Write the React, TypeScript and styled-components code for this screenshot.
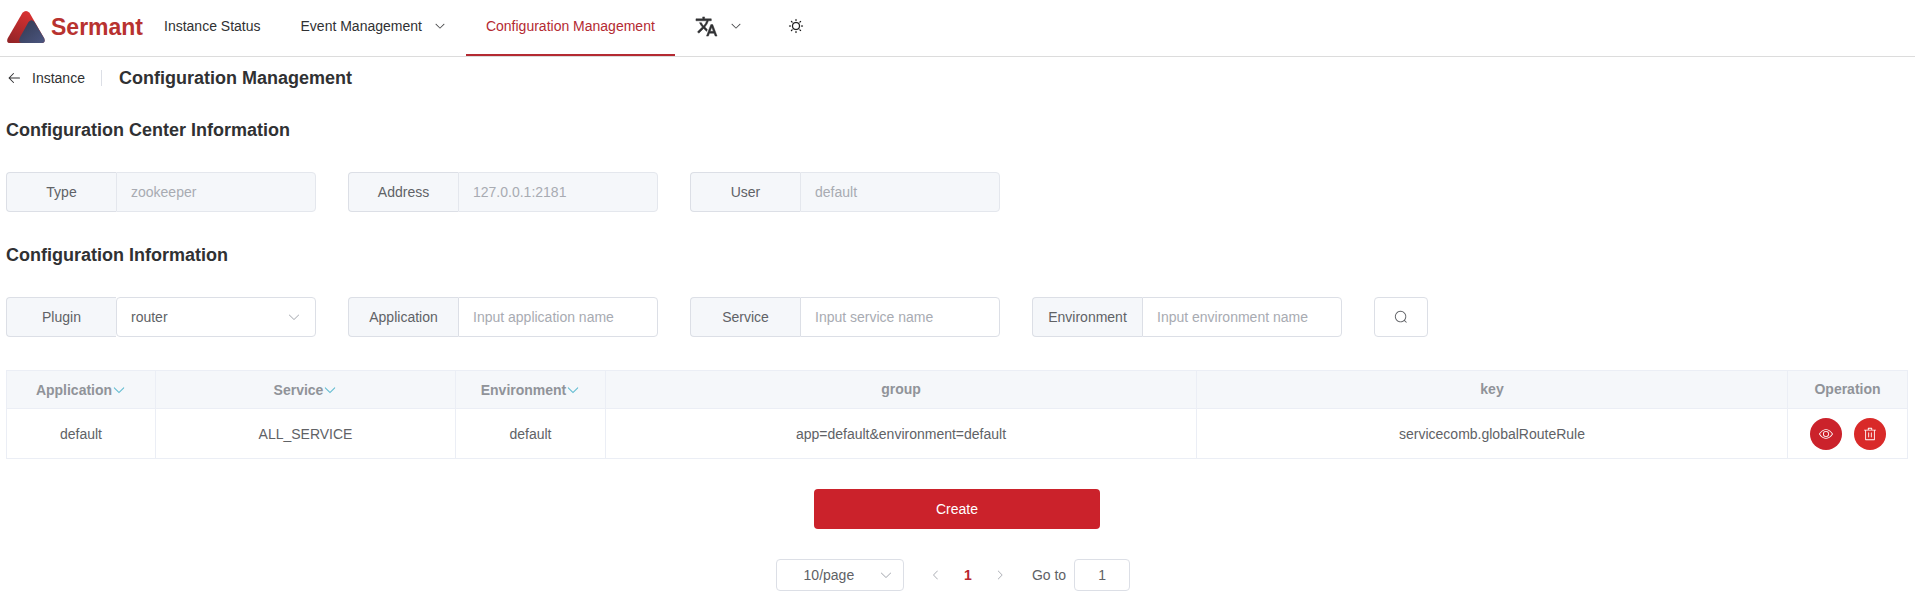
import React from "react";
import styled, { createGlobalStyle, css } from "styled-components";

const GlobalStyle = createGlobalStyle`
  *, *::before, *::after { box-sizing: border-box; }
  body {
    margin: 0;
    background: #fff;
    color: #606266;
    font-family: "Liberation Sans", Arial, sans-serif;
    font-size: 14px;
    line-height: 20px;
  }
  button, input, select { font: inherit; color: inherit; margin: 0; }
  svg { display: block; flex: none; }
`;

const paths = {
  down: "M831.872 340.864 512 652.672 192.128 340.864a30.592 30.592 0 0 0-42.752 0 29.12 29.12 0 0 0 0 41.6L489.664 714.24a32 32 0 0 0 44.672 0l340.288-331.712a29.12 29.12 0 0 0 0-41.728 30.592 30.592 0 0 0-42.752 0z",
  left: "M609.408 149.376 277.76 489.6a32 32 0 0 0 0 44.672l331.648 340.352a29.12 29.12 0 0 0 41.728 0 30.592 30.592 0 0 0 0-42.752L339.264 511.936l311.872-319.872a30.592 30.592 0 0 0 0-42.688 29.12 29.12 0 0 0-41.728 0z",
  right: "M340.864 149.312a30.592 30.592 0 0 0 0 42.752L652.736 512 340.864 831.872a30.592 30.592 0 0 0 0 42.752 29.12 29.12 0 0 0 41.728 0L714.24 534.336a32 32 0 0 0 0-44.672L382.592 149.376a29.12 29.12 0 0 0-41.728 0z",
  back: "M224 480h640a32 32 0 1 1 0 64H224a32 32 0 0 1 0-64M237.248 512l265.408 265.344a32 32 0 0 1-45.312 45.312l-288-288a32 32 0 0 1 0-45.312l288-288a32 32 0 1 1 45.312 45.312z",
  search: "m795.904 750.72 124.992 124.928a32 32 0 0 1-45.248 45.248L750.656 795.904a416 416 0 1 1 45.248-45.248zM480 832a352 352 0 1 0 0-704 352 352 0 0 0 0 704",
  view: "M512 160c320 0 512 352 512 352S832 864 512 864 0 512 0 512s192-352 512-352m0 64c-225.28 0-384.128 208.064-436.8 288 52.608 79.872 211.456 288 436.8 288 225.28 0 384.128-208.064 436.8-288-52.608-79.872-211.456-288-436.8-288zm0 64a224 224 0 1 1 0 448 224 224 0 0 1 0-448m0 64a160.192 160.192 0 0 0-160 160c0 88.192 71.744 160 160 160s160-71.808 160-160-71.744-160-160-160",
  trash: "M160 256H96a32 32 0 0 1 0-64h256V95.936a32 32 0 0 1 32-32h256a32 32 0 0 1 32 32V192h256a32 32 0 1 1 0 64h-64v672a32 32 0 0 1-32 32H192a32 32 0 0 1-32-32zm448-64v-64H416v64zM224 896h576V256H224zm192-128a32 32 0 0 1-32-32V416a32 32 0 0 1 64 0v320a32 32 0 0 1-32 32m192 0a32 32 0 0 1-32-32V416a32 32 0 0 1 64 0v320a32 32 0 0 1-32 32",
  sun: "M512 704a192 192 0 1 0 0-384 192 192 0 0 0 0 384m0 64a256 256 0 1 1 0-512 256 256 0 0 1 0 512m0-704a32 32 0 0 1 32 32v64a32 32 0 0 1-64 0V96a32 32 0 0 1 32-32m0 768a32 32 0 0 1 32 32v64a32 32 0 1 1-64 0v-64a32 32 0 0 1 32-32M195.2 195.2a32 32 0 0 1 45.248 0l45.248 45.248a32 32 0 1 1-45.248 45.248L195.2 240.448a32 32 0 0 1 0-45.248zm543.104 543.104a32 32 0 0 1 45.248 0l45.248 45.248a32 32 0 0 1-45.248 45.248l-45.248-45.248a32 32 0 0 1 0-45.248M64 512a32 32 0 0 1 32-32h64a32 32 0 0 1 0 64H96a32 32 0 0 1-32-32m768 0a32 32 0 0 1 32-32h64a32 32 0 1 1 0 64h-64a32 32 0 0 1-32-32M195.2 828.8a32 32 0 0 1 0-45.248l45.248-45.248a32 32 0 0 1 45.248 45.248L240.448 828.8a32 32 0 0 1-45.248 0zm543.104-543.104a32 32 0 0 1 0-45.248l45.248-45.248a32 32 0 0 1 45.248 45.248l-45.248 45.248a32 32 0 0 1-45.248 0",
};

function Icon({ name, size = 14, weight = 0 }: { name: keyof typeof paths; size?: number; weight?: number }) {
  return (
    <svg
      width={size}
      height={size}
      viewBox="0 0 1024 1024"
      fill="currentColor"
      stroke="currentColor"
      strokeWidth={weight}
      aria-hidden="true"
    >
      <path d={paths[name]} />
    </svg>
  );
}

function TranslateIcon() {
  return (
    <svg width="23" height="23" viewBox="0 0 24 24" fill="currentColor" stroke="currentColor" strokeWidth="0.5" aria-hidden="true">
      <path d="M12.87 15.07l-2.54-2.51.03-.03A17.52 17.52 0 0 0 14.07 6H17V4h-7V2H8v2H1v2h11.17C11.5 7.92 10.44 9.75 9 11.35 8.07 10.32 7.3 9.19 6.69 8h-2c.73 1.63 1.73 3.17 2.98 4.56l-5.09 5.02L4 19l5-5 3.11 3.11.76-2.04zM18.5 10h-2L12 22h2l1.12-3h4.75L21 22h2l-4.5-12zm-2.62 7l1.62-4.33L19.12 17h-3.24z" />
    </svg>
  );
}

const TopBar = styled.header`
  display: flex;
  align-items: stretch;
  height: 57px;
  border-bottom: 1px solid #dcdcdc;
`;

const Brand = styled.a`
  display: flex;
  align-items: center;
  gap: 5px;
  width: 144px;
  padding: 0 0 2px 6px;
  color: #b8322f;
  font-size: 23px;
  font-weight: 700;
  line-height: 32px;
  text-decoration: none;
`;

const Menu = styled.nav`
  display: flex;
`;

const menuItem = css`
  display: flex;
  align-items: center;
  gap: 12px;
  padding: 0 20px 2px;
  border: 0;
  border-bottom: 2px solid transparent;
  background: none;
  color: #303133;
  white-space: nowrap;
  text-decoration: none;
  cursor: pointer;
`;

const MenuLink = styled.a<{ $active?: boolean }>`
  ${menuItem}
  ${(p) => p.$active && css`
    color: #b42a32;
    border-bottom-color: #b42a32;
  `}
`;

const MenuButton = styled.button`
  ${menuItem}
`;

const ThemeButton = styled(MenuButton)`
  padding-left: 26px;
  color: #111;
`;

const Page = styled.main`
  padding: 9px 7px 7px 6px;
`;

const PageHeader = styled.div`
  display: flex;
  align-items: center;
  height: 24px;
`;

const BackLink = styled.a`
  display: flex;
  align-items: center;
  gap: 10px;
  color: #303133;
  text-decoration: none;
`;

const Divider = styled.span`
  width: 1px;
  height: 16px;
  margin: 0 17px 0 16px;
  background: #dcdfe6;
`;

const PageTitle = styled.h1`
  margin: 0;
  color: #303133;
  font-size: 18px;
  line-height: 24px;
`;

const SectionTitle = styled.h2`
  margin: 28px 0 30px;
  color: #303133;
  font-size: 18px;
  line-height: 24px;
`;

const FieldRow = styled.div`
  display: flex;
  flex-wrap: wrap;
  gap: 32px;
  margin-bottom: 31px;
`;

const Field = styled.div`
  display: flex;
  width: 310px;
  height: 40px;
`;

const FieldLabel = styled.label`
  display: flex;
  align-items: center;
  justify-content: center;
  flex: none;
  width: 110px;
  border: 1px solid #dcdfe6;
  border-right: 0;
  border-radius: 4px 0 0 4px;
  background: #f5f7fa;
`;

const FieldInput = styled.input`
  flex: 1;
  min-width: 0;
  padding: 0 14px;
  border: 1px solid #dcdfe6;
  border-radius: 0 4px 4px 0;
  background: #fff;
  &::placeholder { color: #a8abb2; opacity: 1; }
  &:disabled {
    border-color: #e4e7ed;
    background: #f5f7fa;
    color: #a8abb2;
  }
`;

const SelectWrap = styled.div<{ $small?: boolean }>`
  display: grid;
  align-items: center;
  flex: ${(p) => (p.$small ? "0 0 128px" : 1)};
  height: ${(p) => (p.$small ? 32 : 40)}px;
  color: #a8abb2;
  > * { grid-area: 1 / 1; }
  > svg { justify-self: end; margin-right: ${(p) => (p.$small ? 11 : 15)}px; pointer-events: none; z-index: 1; }
`;

const Select = styled.select<{ $centered?: boolean }>`
  appearance: none;
  width: 100%;
  height: 100%;
  padding: ${(p) => (p.$centered ? "0 32px 0 10px" : "0 32px 0 14px")};
  border: 1px solid #dcdfe6;
  border-radius: 4px;
  background: #fff;
  color: #606266;
  text-align: ${(p) => (p.$centered ? "center" : "left")};
  text-align-last: ${(p) => (p.$centered ? "center" : "left")};
`;

const SearchButton = styled.button`
  display: flex;
  align-items: center;
  justify-content: center;
  width: 54px;
  height: 40px;
  padding: 0;
  border: 1px solid #dcdfe6;
  border-radius: 4px;
  background: #fff;
`;

const Table = styled.table`
  width: 100%;
  margin-top: 33px;
  table-layout: fixed;
  border-collapse: collapse;
  text-align: center;
  th, td { padding: 0; border: 1px solid #ebeef5; }
  th { height: 38px; padding-bottom: 1px; background: #f5f7fa; color: #909399; }
  td { height: 50px; }
`;

const Col = styled.col<{ $width?: number }>`
  ${(p) => p.$width && `width: ${p.$width}px;`}
`;

const FilterButton = styled.button`
  display: inline-flex;
  align-items: center;
  padding: 0;
  border: 0;
  background: none;
  font-weight: 700;
  vertical-align: middle;
  svg { color: #63bcd2; }
`;

const Actions = styled.div`
  display: flex;
  justify-content: center;
  gap: 12px;
`;

const RoundButton = styled.button<{ $danger?: boolean }>`
  display: flex;
  align-items: center;
  justify-content: center;
  width: 32px;
  height: 32px;
  padding: 0;
  border: 0;
  border-radius: 50%;
  background: ${(p) => (p.$danger ? "#d92a29" : "#cb222b")};
  color: #fff;
`;

const CreateButton = styled.button`
  display: block;
  width: 15%;
  height: 40px;
  margin: 30px auto;
  border: 0;
  border-radius: 4px;
  background: #cb222b;
  color: #fff;
`;

const Pagination = styled.nav`
  display: flex;
  align-items: center;
  justify-content: center;
  gap: 16px;
`;

const Pager = styled.div`
  display: flex;
`;

const PagerButton = styled.button<{ $current?: boolean }>`
  display: flex;
  align-items: center;
  justify-content: center;
  width: 32px;
  height: 32px;
  padding: 0;
  border: 0;
  background: none;
  color: ${(p) => (p.$current ? "#b8252d" : "#a8abb2")};
  font-weight: ${(p) => (p.$current ? 700 : 400)};
`;

const Jumper = styled.label`
  display: flex;
  align-items: center;
  gap: 8px;
  padding-right: 8px;
`;

const JumpInput = styled.input`
  width: 56px;
  height: 32px;
  padding: 0 10px;
  border: 1px solid #dcdfe6;
  border-radius: 4px;
  text-align: center;
`;

function Logo() {
  return (
    <svg width="40" height="34" viewBox="0 0 40 34" aria-hidden="true">
      <defs>
        <linearGradient id="logoRed" x1="0" y1="1" x2="0.6" y2="0">
          <stop offset="0" stopColor="#8f2326" />
          <stop offset="1" stopColor="#dc3232" />
        </linearGradient>
        <linearGradient id="logoBlue" x1="0" y1="0" x2="1" y2="1">
          <stop offset="0" stopColor="#333950" />
          <stop offset="1" stopColor="#4b5680" />
        </linearGradient>
      </defs>
      <path d="M16.5 2.8Q20 -1 23.5 2.8L38 28Q40 33 35 33H4Q0 33 1.6 28.5Z" fill="url(#logoRed)" />
      <path d="M22.5 12Q25.5 8.5 28.5 12L38.3 28.5Q40 33 35.5 33H16Q12 33 13.6 28Z" fill="url(#logoBlue)" />
    </svg>
  );
}

const centerInfo = [
  { id: "type", label: "Type", value: "zookeeper" },
  { id: "address", label: "Address", value: "127.0.0.1:2181" },
  { id: "user", label: "User", value: "default" },
];

const filters = [
  { id: "application", label: "Application", hint: "Input application name" },
  { id: "service", label: "Service", hint: "Input service name" },
  { id: "environment", label: "Environment", hint: "Input environment name" },
];

const rows = [
  {
    application: "default",
    service: "ALL_SERVICE",
    environment: "default",
    group: "app=default&environment=default",
    key: "servicecomb.globalRouteRule",
  },
];

export default function App() {
  return (
    <>
      <GlobalStyle />
      <TopBar>
        <Brand href="#">
          <Logo />
          Sermant
        </Brand>
        <Menu aria-label="Main">
          <MenuLink href="#instances">Instance Status</MenuLink>
          <MenuButton type="button">
            Event Management
            <Icon name="down" size={12} weight={12} />
          </MenuButton>
          <MenuLink href="#config" $active aria-current="page">Configuration Management</MenuLink>
          <MenuButton type="button" aria-label="Language">
            <TranslateIcon />
            <Icon name="down" size={12} weight={12} />
          </MenuButton>
          <ThemeButton type="button" aria-label="Theme">
            <Icon name="sun" size={16} weight={10} />
          </ThemeButton>
        </Menu>
      </TopBar>

      <Page>
        <PageHeader>
          <BackLink href="#instances">
            <Icon name="back" size={16} />
            Instance
          </BackLink>
          <Divider />
          <PageTitle>Configuration Management</PageTitle>
        </PageHeader>

        <SectionTitle>Configuration Center Information</SectionTitle>
        <FieldRow>
          {centerInfo.map((f) => (
            <Field key={f.id}>
              <FieldLabel htmlFor={f.id}>{f.label}</FieldLabel>
              <FieldInput id={f.id} value={f.value} disabled readOnly />
            </Field>
          ))}
        </FieldRow>

        <SectionTitle>Configuration Information</SectionTitle>
        <FieldRow>
          <Field>
            <FieldLabel htmlFor="plugin">Plugin</FieldLabel>
            <SelectWrap>
              <Select id="plugin" defaultValue="router">
                <option>router</option>
              </Select>
              <Icon name="down" />
            </SelectWrap>
          </Field>
          {filters.map((f) => (
            <Field key={f.id}>
              <FieldLabel htmlFor={f.id}>{f.label}</FieldLabel>
              <FieldInput id={f.id} placeholder={f.hint} />
            </Field>
          ))}
          <SearchButton type="button" aria-label="Search">
            <Icon name="search" />
          </SearchButton>
        </FieldRow>

        <Table>
          <colgroup>
            <Col $width={149} />
            <Col $width={300} />
            <Col $width={150} />
            <Col />
            <Col />
            <Col $width={120} />
          </colgroup>
          <thead>
            <tr>
              {["Application", "Service", "Environment"].map((name) => (
                <th key={name}>
                  <FilterButton type="button">
                    {name}
                    <Icon name="down" weight={32} />
                  </FilterButton>
                </th>
              ))}
              <th>group</th>
              <th>key</th>
              <th>Operation</th>
            </tr>
          </thead>
          <tbody>
            {rows.map((r) => (
              <tr key={r.key}>
                <td>{r.application}</td>
                <td>{r.service}</td>
                <td>{r.environment}</td>
                <td>{r.group}</td>
                <td>{r.key}</td>
                <td>
                  <Actions>
                    <RoundButton type="button" aria-label="View"><Icon name="view" /></RoundButton>
                    <RoundButton type="button" aria-label="Delete" $danger><Icon name="trash" /></RoundButton>
                  </Actions>
                </td>
              </tr>
            ))}
          </tbody>
        </Table>

        <CreateButton type="button">Create</CreateButton>

        <Pagination aria-label="Pagination">
          <SelectWrap $small>
            <Select $centered aria-label="Page size" defaultValue="10/page">
              <option>10/page</option>
            </Select>
            <Icon name="down" />
          </SelectWrap>
          <Pager>
            <PagerButton type="button" aria-label="Previous page"><Icon name="left" size={12} /></PagerButton>
            <PagerButton type="button" $current>1</PagerButton>
            <PagerButton type="button" aria-label="Next page"><Icon name="right" size={12} /></PagerButton>
          </Pager>
          <Jumper>
            Go to
            <JumpInput defaultValue="1" />
          </Jumper>
        </Pagination>
      </Page>
    </>
  );
}
